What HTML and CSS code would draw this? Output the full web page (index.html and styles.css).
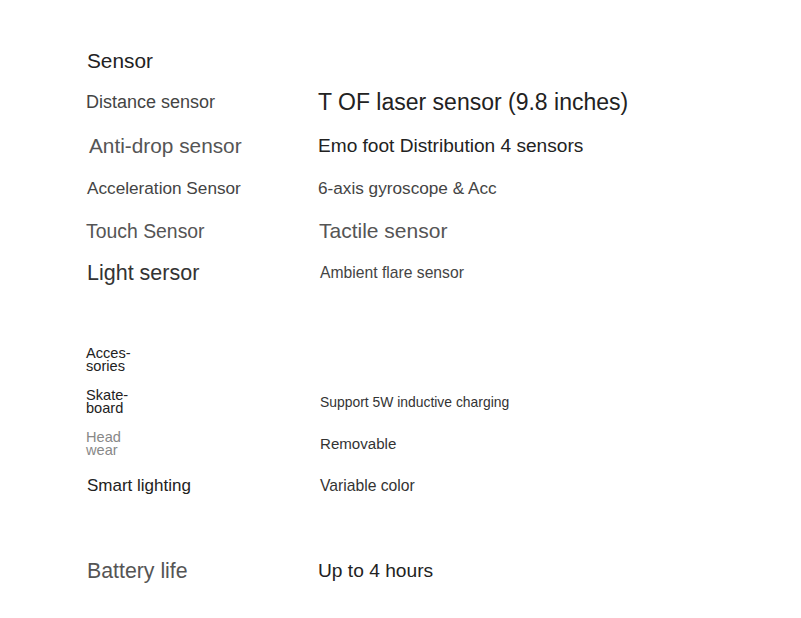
FILE: index.html
```html
<!DOCTYPE html>
<html lang="en">
<head>
<meta charset="utf-8">
<title>Specs</title>
<link rel="stylesheet" href="styles.css">
</head>
<body>
<main class="spec">
  <section class="group sensors">
    <div class="row title-row"><div class="k k-title">Sensor</div></div>
    <div class="row"><div class="k k-distance">Distance sensor</div><div class="v v-tof">T OF laser sensor (9.8 inches)</div></div>
    <div class="row"><div class="k k-antidrop">Anti-drop sensor</div><div class="v v-emo">Emo foot Distribution 4 sensors</div></div>
    <div class="row"><div class="k k-accel">Acceleration Sensor</div><div class="v v-gyro">6-axis gyroscope &amp; Acc</div></div>
    <div class="row"><div class="k k-touch">Touch Sensor</div><div class="v v-tactile">Tactile sensor</div></div>
    <div class="row row-light"><div class="k k-light">Light sersor</div><div class="v v-ambient">Ambient flare sensor</div></div>
  </section>
  <section class="group accessories">
    <div class="row arow"><div class="k k-small">Acces-<br>sories</div></div>
    <div class="row arow"><div class="k k-small">Skate-<br>board</div><div class="v v-support">Support 5W inductive charging</div></div>
    <div class="row arow"><div class="k k-small k-grey">Head<br>wear</div><div class="v v-removable">Removable</div></div>
    <div class="row arow"><div class="k k-smart">Smart lighting</div><div class="v v-variable">Variable color</div></div>
  </section>
  <section class="group battery">
    <div class="row"><div class="k k-battery">Battery life</div><div class="v v-hours">Up to 4 hours</div></div>
  </section>
</main>
</body>
</html>
```
FILE: styles.css
```css
html, body {
  margin: 0;
  padding: 0;
  background: #fff;
}
body {
  font-family: "Liberation Sans", Arial, sans-serif;
  color: #222;
}
.spec {
  padding: 40px 0 0 86px;
  display: flex;
  flex-direction: column;
}
.group {
  display: flex;
  flex-direction: column;
}
.accessories {
  margin-top: 45px;
}
.battery {
  margin-top: 43px;
}
.row {
  display: grid;
  grid-template-columns: 232px 1fr;
  align-items: center;
  height: 43px;
}
.title-row {
  height: 41px;
}
.row-light {
  height: 41px;
}
.arow {
  height: 42px;
}
.k, .v {
  white-space: nowrap;
  line-height: 1.15;
}
.k-title { font-size: 20.8px; color: #222; padding-left: 1px; }
.k-distance { font-size: 18px; color: #444; }
.v-tof { font-size: 23px; color: #222; }
.k-antidrop { font-size: 20.8px; color: #555; padding-left: 3px; }
.v-emo { font-size: 19.1px; color: #222; }
.k-accel { font-size: 17.2px; color: #444; padding-left: 1px; }
.v-gyro { font-size: 17.2px; color: #444; }
.k-touch { font-size: 19.4px; color: #555; }
.v-tactile { font-size: 21px; color: #555; padding-left: 1px; }
.k-light { font-size: 21.5px; color: #333; padding-left: 1px; }
.v-ambient { font-size: 15.7px; color: #444; padding-left: 2px; }
.k-small {
  font-size: 14.6px;
  line-height: 13px;
  color: #222;
}
.k-grey { color: #888; }
.v-support { font-size: 13.9px; color: #333; padding-left: 2px; }
.v-removable { font-size: 15.1px; color: #333; padding-left: 2px; }
.k-smart { font-size: 17px; color: #222; padding-left: 1px; }
.v-variable { font-size: 15.7px; color: #333; padding-left: 2px; }
.k-battery { font-size: 21.3px; color: #555; padding-left: 1px; }
.v-hours { font-size: 19.2px; color: #222; }
```
